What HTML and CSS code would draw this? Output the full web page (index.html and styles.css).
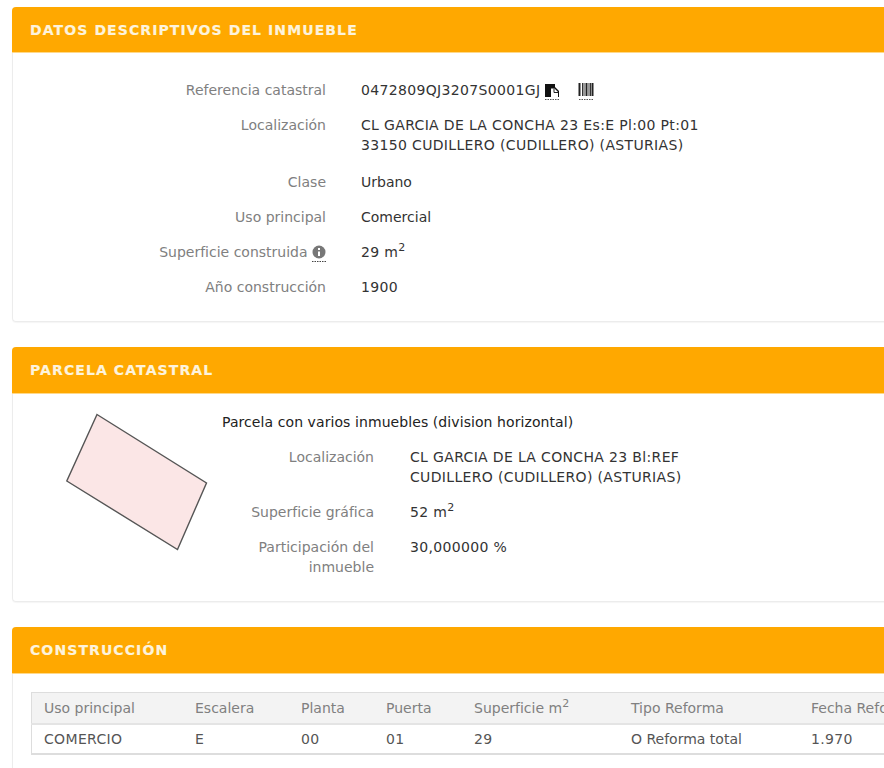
FILE: index.html
```html
<!DOCTYPE html>
<html lang="es">
<head>
<meta charset="utf-8">
<title>Datos del inmueble</title>
<link rel="stylesheet" href="styles.css">
</head>
<body>
<main class="page">
  <section class="panel panel-first">
    <h2 class="panel-head">DATOS DESCRIPTIVOS DEL INMUEBLE</h2>
    <dl class="fields fields-main">
      <dt>Referencia catastral</dt>
      <dd class="ref caps"><span>0472809QJ3207S0001GJ</span>
        <svg class="ico-copy" width="16" height="18" viewBox="0 0 16 18"><path d="M1 1h10v3l4 4v6H1z" fill="#111"/><path d="M7 5.500h3.500l3.500 3.500v5H7z" fill="#fff"/><path d="M10 5.500v4h4" fill="none" stroke="#222"/><path d="M1 16.500h14" stroke="#555" stroke-dasharray="1.500 1"/></svg>
        <svg class="ico-bar" width="17" height="18" viewBox="0 0 17 18"><path d="M1.500 0v13M8.500 0v13M14.500 0v13" stroke="#222" stroke-width="2"/><path d="M4.500 0v13M6 0v13M11 0v13M12.500 0v13" stroke="#333"/><path d="M1 16.500h15" stroke="#555" stroke-dasharray="1.500 1"/></svg>
      </dd>
      <dt>Localización</dt>
      <dd class="caps two-line">CL GARCIA DE LA CONCHA 23 Es:E Pl:00 Pt:01<br>33150 CUDILLERO (CUDILLERO) (ASTURIAS)</dd>
      <dt>Clase</dt>
      <dd>Urbano</dd>
      <dt>Uso principal</dt>
      <dd>Comercial</dd>
      <dt>Superficie construida <svg class="ico-info" width="14" height="17" viewBox="0 0 14 17"><circle cx="7" cy="7" r="6.500" fill="#777"/><path d="M7 3v2M7 6.500V11" stroke="#fff" stroke-width="2"/><path d="M0 16.500h14" stroke="#444" stroke-dasharray="1.500 1"/></svg></dt>
      <dd class="caps">29 m<sup>2</sup></dd>
      <dt>Año construcción</dt>
      <dd class="caps">1900</dd>
    </dl>
  </section>

  <section class="panel panel-second">
    <h2 class="panel-head">PARCELA CATASTRAL</h2>
    <div class="parcel-body">
      <svg class="parcel-shape" width="142" height="138" viewBox="0 0 142 138"><polygon points="31,1.500 140.500,70 111.500,136.500 0.800,68" fill="#fbe6e6" stroke="#555" stroke-width="1.400"/></svg>
      <div class="parcel-info">
        <p class="parcel-title">Parcela con varios inmuebles (division horizontal)</p>
        <dl class="fields fields-parcel">
          <dt>Localización</dt>
          <dd class="caps">CL GARCIA DE LA CONCHA 23 Bl:REF<br>CUDILLERO (CUDILLERO) (ASTURIAS)</dd>
          <dt>Superficie gráfica</dt>
          <dd class="caps">52 m<sup>2</sup></dd>
          <dt>Participación del<br>inmueble</dt>
          <dd class="caps">30,000000 %</dd>
        </dl>
      </div>
    </div>
  </section>

  <section class="panel panel-third">
    <h2 class="panel-head">CONSTRUCCIÓN</h2>
    <div class="table-wrap">
      <table class="cons">
        <thead>
          <tr><th class="c1">Uso principal</th><th class="c2">Escalera</th><th class="c3">Planta</th><th class="c4">Puerta</th><th class="c5">Superficie m<sup>2</sup></th><th class="c6">Tipo Reforma</th><th class="c7">Fecha Reforma</th></tr>
        </thead>
        <tbody>
          <tr><td class="caps">COMERCIO</td><td>E</td><td class="caps">00</td><td class="caps">01</td><td class="caps">29</td><td>O Reforma total</td><td class="caps">1.970</td></tr>
        </tbody>
      </table>
    </div>
  </section>
</main>
</body>
</html>
```

FILE: styles.css
```css
html, body {
  margin: 0;
  padding: 0;
  height: 768px;
  overflow: hidden;
  background: #fff;
}
.page {
  width: 1000px;
  padding: 7px 0 0 12px;
  font-family: "DejaVu Sans", Verdana, sans-serif;
  font-size: 14px;
  line-height: 20px;
  color: #333;
}
.caps { letter-spacing: 0.34px; }
.panel {
  border: 1px solid #ececec;
  border-top: 0;
  border-radius: 4px;
  margin-bottom: 25px;
  box-sizing: border-box;
  box-shadow: 0 1px 1px rgba(0,0,0,.04);
}
.panel-head {
  margin: 0 0 0 -1px;
  height: 46px;
  padding-left: 18px;
  background: #ffa800;
  border-radius: 4px 4px 0 0;
  border-bottom: 1px solid #ffd98a;
  box-sizing: border-box;
  color: #fdf3dc;
  font-size: 14px;
  font-weight: 700;
  letter-spacing: 1.1px;
  line-height: 46px;
  -webkit-text-stroke: 0.2px #fdf3dc;
}
.panel-second .panel-head,
.panel-third .panel-head { height: 47px; }
.panel-first { height: 315px; }
.panel-second { height: 255px; }
.panel-third { height: 200px; }
.fields {
  display: grid;
  column-gap: 35px;
  row-gap: 15px;
  margin: 0;
}
.fields dt {
  text-align: right;
  color: #808080;
}
.fields dd {
  margin: 0;
  color: #333;
}
.two-line { padding-bottom: 2px; }
.fields-main {
  grid-template-columns: 313px 1fr;
  padding-top: 27px;
}
.fields-parcel {
  grid-template-columns: 152px 1fr;
  margin-top: 15px;
  column-gap: 36px;
}
sup {
  font-size: 11px;
  line-height: 0;
}
.fields .ref {
  display: flex;
  align-items: flex-start;
  height: 20px;
}
.ref svg { margin-top: 3px; }
.ico-copy { margin-left: 4px; }
.ico-bar { margin-left: 18px; }
.ico-info { vertical-align: -5px; }
.parcel-body {
  display: flex;
  padding-top: 19px;
}
.parcel-shape {
  flex: none;
  margin-left: 53px;
}
.parcel-info { margin: -1px 0 0 14px; }
.parcel-title {
  margin: 0;
  color: #222;
  letter-spacing: 0.08px;
}
.table-wrap { padding: 18px 0 0 18px; }
.cons {
  width: 900px;
  table-layout: fixed;
  border-collapse: collapse;
  border: 1px solid #ddd;
  border-width: 1px 0 2px 1px;
}
.cons th, .cons td {
  padding: 0 0 0 12px;
  text-align: left;
  font-weight: 400;
  white-space: nowrap;
}
.cons th {
  height: 30px;
  background: #f3f3f3;
  color: #808080;
  border-bottom: 2px solid #e4e4e4;
}
.cons td {
  height: 28px;
  color: #555;
}
.c1 { width: 139px; }
.c2 { width: 94px; }
.c3 { width: 73px; }
.c4 { width: 76px; }
.c5 { width: 145px; }
.c6 { width: 168px; }
.c7 { width: 200px; }
```
